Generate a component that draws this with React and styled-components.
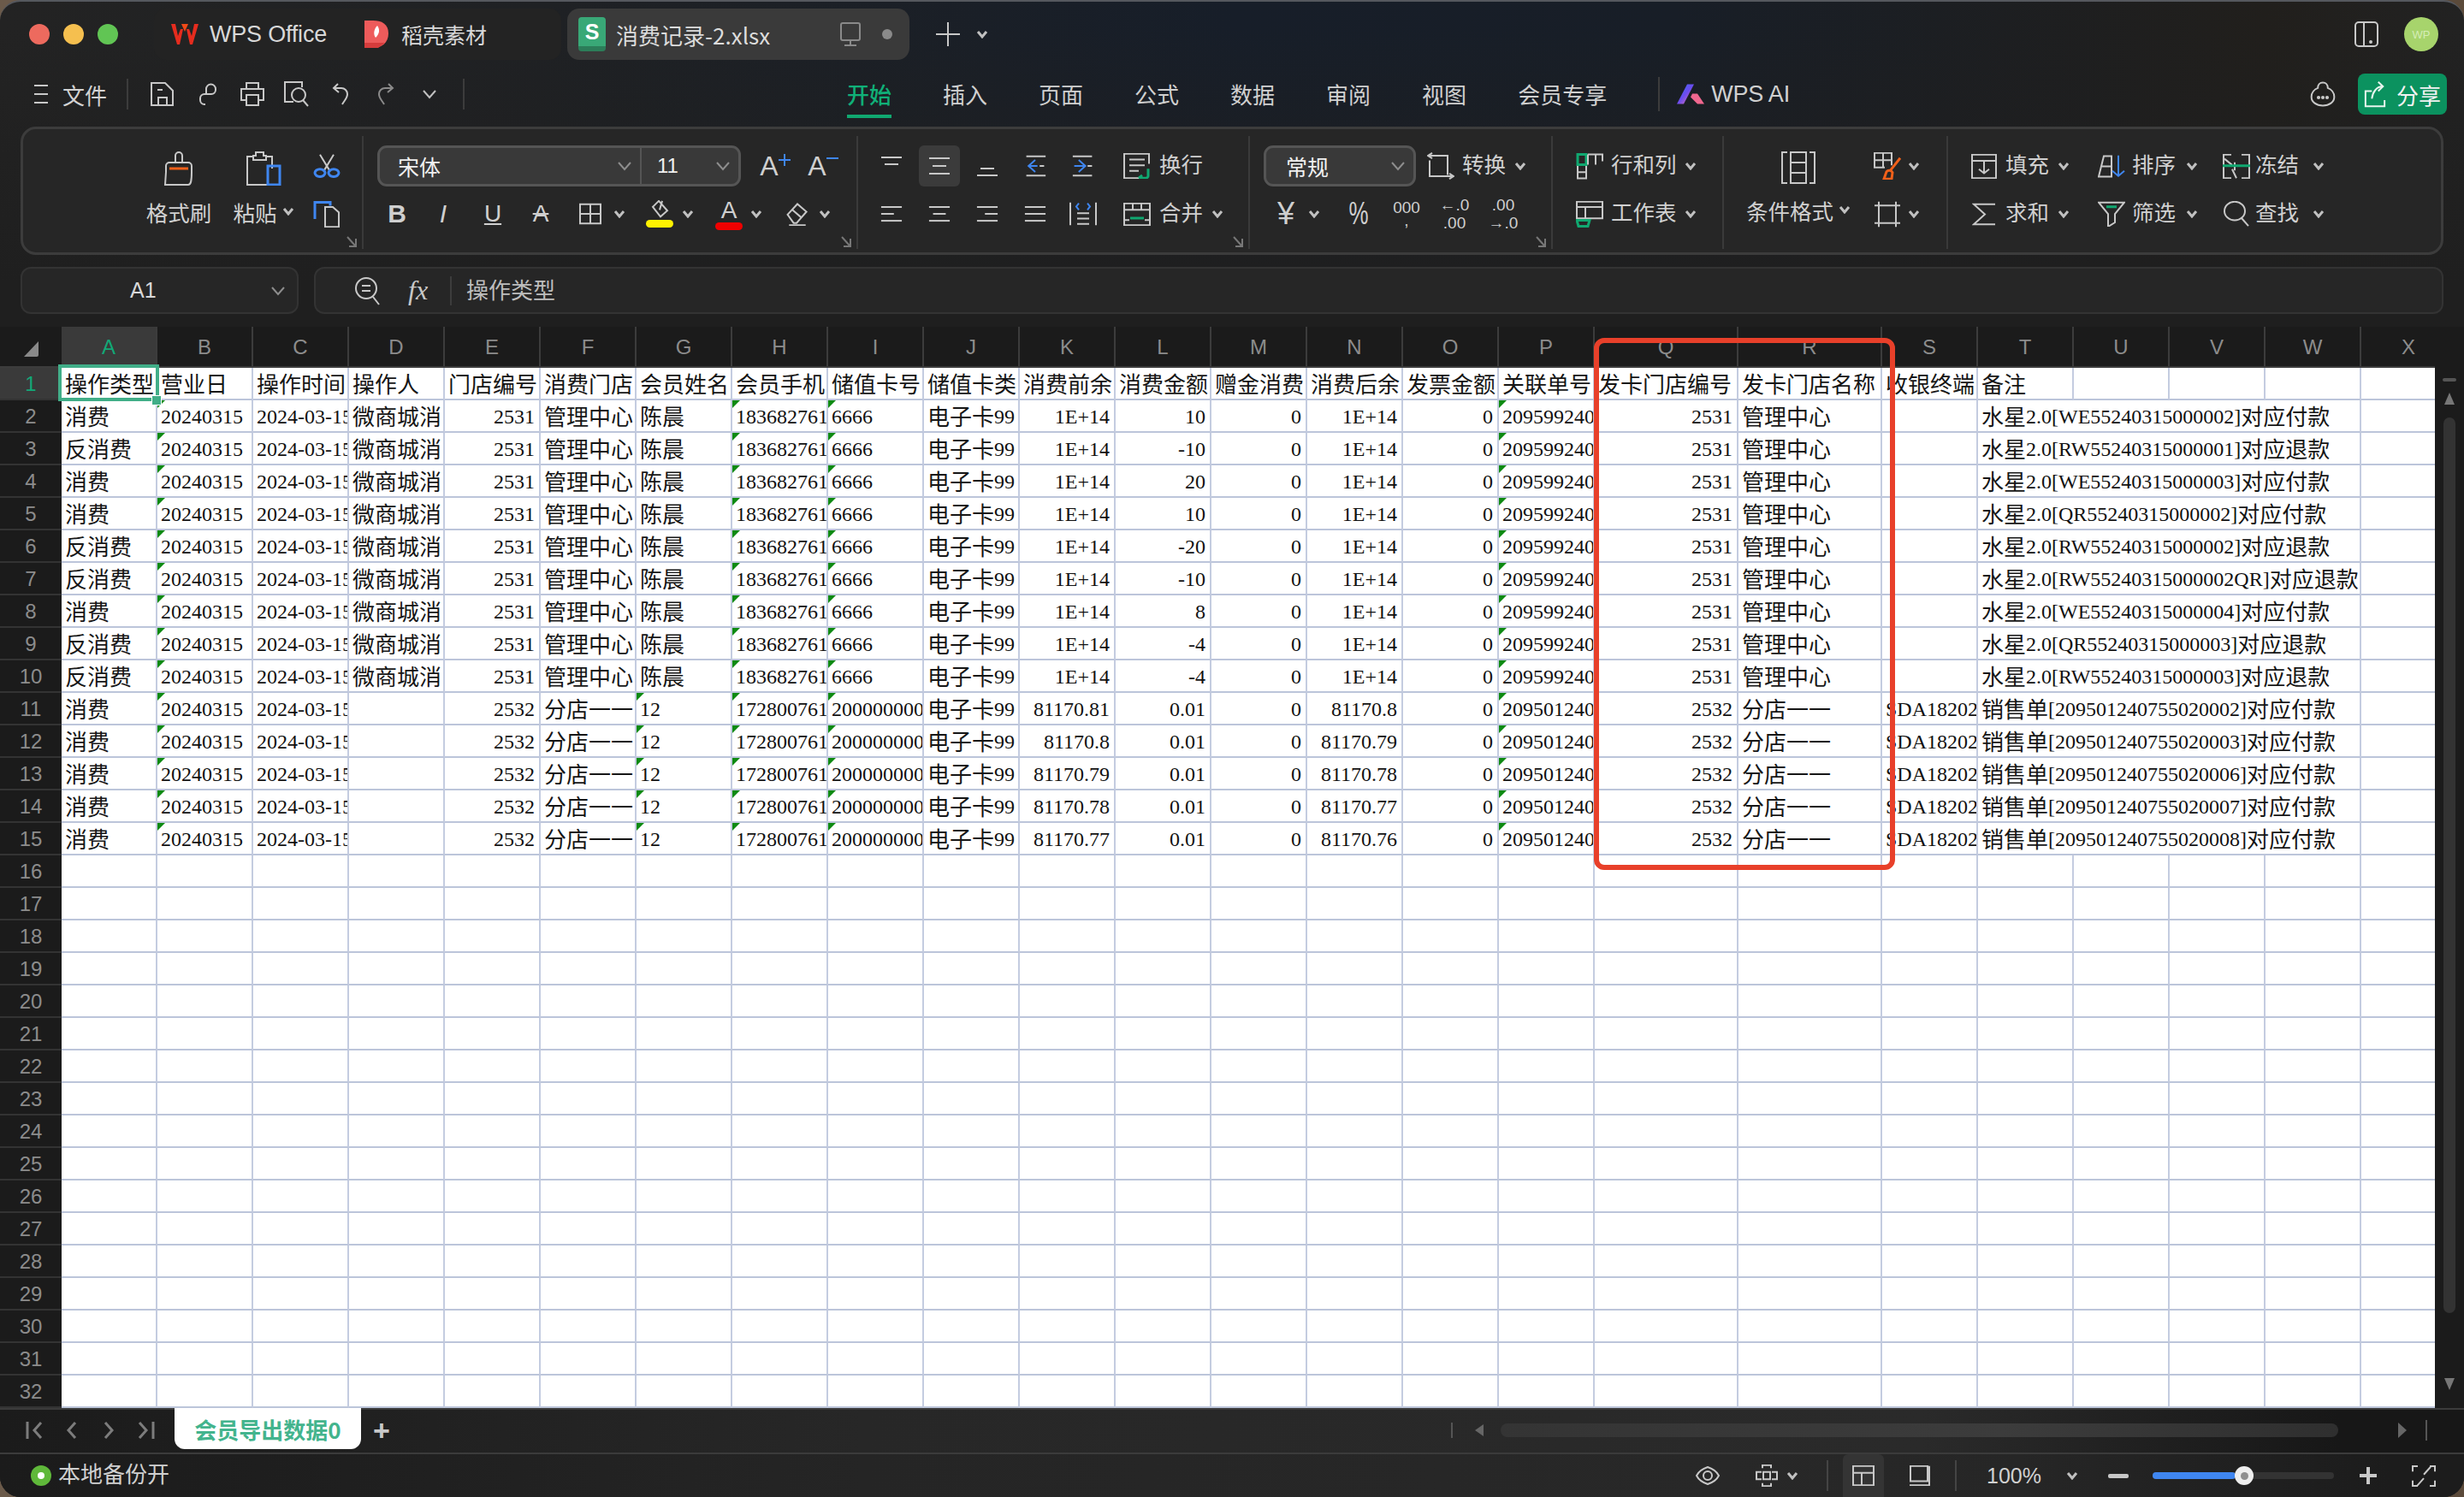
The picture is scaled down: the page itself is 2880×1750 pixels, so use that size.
import React from "react";
import styled, { createGlobalStyle, css } from "styled-components";

const UI = `"Noto Sans CJK SC", "Liberation Sans", sans-serif`;
const LAT = `"Liberation Sans", "Noto Sans CJK SC", sans-serif`;
const BLUE = "#3f86f0", GREEN = "#10a870", ORANGE = "#f0601a";

const Global = createGlobalStyle`
  html, body { margin: 0; padding: 0; width: 2880px; height: 1750px; overflow: hidden; background: linear-gradient(90deg,#6b5a4a,#4a4f5a 50%,#5b4a3a); }
  #root { width: 2880px; height: 1750px; }
  * { box-sizing: border-box; }
`;
const spaced = css`margin-left: ${p => p.$ml || 0}px; flex-shrink: 0;`;

const Window = styled.div`
  width: 2880px; height: 1750px; border-radius: 24px; overflow: hidden; display: flex; flex-direction: column;
  font-family: ${UI}; color: #cfcfcf; border-top: 2px solid #55585e;
  background: linear-gradient(180deg, rgba(31,31,31,0) 30px, #1f1f1f 330px), linear-gradient(90deg,#232323 0%,#1f2124 22%,#171e29 50%,#181e27 68%,#211f1c 92%,#222 100%);
`;
const TitleBar = styled.div`height: 76px; display: flex; align-items: center; padding-left: 34px; flex-shrink: 0;`;
const Light = styled.span`width: 24px; height: 24px; border-radius: 50%; background: ${p => p.$c}; ${spaced}`;
const TabGroup = styled.div`${spaced} display: flex; align-items: center; width: 476px; height: 60px; background: #232323; border-radius: 14px; padding-left: 20px;`;
const AppTab = styled.div`${spaced} display: flex; align-items: center; gap: 15px; font-size: 25px; color: #d8d8d8;`;
const AppLatin = styled.span`font-family: ${LAT}; font-size: 27px; letter-spacing: -.2px;`;
const AiText = styled(AppLatin)`margin-left: 8px; color: #d0d0d0;`;
const FileTab = styled.div`${spaced} display: flex; align-items: center; width: 400px; height: 60px; background: #3a3a3a; border-radius: 14px; padding-left: 13px; color: #dcdcdc; font-size: 26px;`;
const FileName = styled.span`margin-left: 12px; width: 262px; white-space: nowrap;`;
const SheetBadge = styled.span`width: 32px; height: 40px; border-radius: 4px; background: linear-gradient(180deg,#39a877 84%,#2c7d59 84%); color: #fff; font: bold 25px ${LAT}; display: flex; align-items: center; justify-content: center; padding-bottom: 6px;`;
const TabDot = styled.span`${spaced} width: 12px; height: 12px; border-radius: 50%; background: #8a8a8a;`;
const Avatar = styled.span`${spaced} width: 40px; height: 40px; border-radius: 50%; background: #a7d46c; color: #d5edb6; font: 13px ${LAT}; display: flex; align-items: center; justify-content: center;`;
const Push = styled.span`margin-left: auto;`;

const MenuBar = styled.div`height: 64px; margin-bottom: 6px; display: flex; align-items: center; padding-left: 40px; flex-shrink: 0; font-size: 26px;`;
const Sep = styled.span`${spaced} width: 2px; height: ${p => p.$h || 36}px; background: ${p => p.$c || "#3c3c3c"};`;
const MenuText = styled.span`${spaced} white-space: nowrap; color: #d2d2d2;`;
const FormulaText = styled(MenuText)`color: #bdbdbd; position: relative; top: -2px;`;
const MenuTab = styled.span`
  ${spaced} position: relative; white-space: nowrap; color: ${p => p.$on ? "#10b078" : "#d0d0d0"}; font-weight: ${p => p.$on ? 500 : 400}; line-height: 64px;
  ${p => p.$on && css`&::after { content: ""; position: absolute; left: 0; right: 0; top: 56px; height: 4px; background: #10a870; }`}
`;
const ShareBtn = styled.div`${spaced} width: 104px; height: 48px; border-radius: 8px; background: #0b925f; display: flex; align-items: center; justify-content: center; gap: 12px; color: #f2f2f2; margin-right: 20px;`;

const Ribbon = styled.div`
  margin: 0 24px; height: 150px; flex-shrink: 0; display: flex; background: #262626; border: 3px solid #3c3c3c; border-radius: 18px;
`;
const Group = styled.div`
  position: relative; flex-shrink: 0; width: ${p => p.$w}px; padding-left: ${p => p.$pl || 0}px;
  display: flex; ${p => p.$row ? "flex-direction: row;" : "flex-direction: column; gap: 8px; padding-top: 19px;"}
`;
const GroupLine = styled.span`width: 2px; height: 132px; margin-top: 8px; background: #3a3a3a; flex-shrink: 0;`;
const Launcher = styled.span`position: absolute; right: 6px; bottom: 5px; display: flex;`;
const Row = styled.div`display: flex; align-items: center; height: 48px;`;
const IconSlot = styled.span`${spaced} display: flex;`;
const Tool = styled.div`${spaced} display: flex; align-items: center; justify-content: center; width: ${p => p.$w || 36}px; height: 48px; border-radius: 6px; background: ${p => p.$on ? "#3b3b3b" : "transparent"}; color: #cfcfcf;`;
const Glyph = styled.span`
  font: ${p => p.$s || 28}px ${LAT}; font-weight: ${p => p.$b ? 700 : 400}; font-style: ${p => p.$i ? "italic" : "normal"}; text-decoration: ${p => p.$u ? "underline" : p.$st ? "line-through" : "none"};
  line-height: 1; color: ${p => p.$c || "#cfcfcf"}; white-space: nowrap; ${p => p.$nar && "transform: scaleX(.72);"}
`;
const Stack = styled.div`display: flex; flex-direction: column; align-items: center; gap: ${p => p.$gap ?? 2}px;`;
const Comma = styled(Glyph)`margin-top: -4px;`;
const Pill = styled.span`width: 32px; height: 9px; border-radius: 5px; background: ${p => p.$c};`;
const Label = styled.span`${spaced} font-size: 25.5px; color: #d0d0d0; white-space: nowrap; line-height: 1; position: relative; top: -3px;`;
const BigTool = styled.div`${spaced} width: ${p => p.$w}px; display: flex; flex-direction: column; align-items: center; padding-top: 26px;`;
const BigLabel = styled.div`margin-top: 12px; height: 36px; display: flex; align-items: center; font-size: 25.5px; color: #d0d0d0; white-space: nowrap; gap: 6px;`;
const SmallCol = styled.div`${spaced} display: flex; flex-direction: column; gap: 8px; padding-top: 19px;`;
const Select = styled.div`
  ${spaced} width: ${p => p.$w}px; height: 48px; display: flex; background: #393939; border: 3px solid #555; border-radius: 11px; color: #f0f0f0; font-size: 25px;
`;
const SelectPart = styled.div`display: flex; align-items: center; justify-content: space-between; padding: 0 9px 0 ${p => p.$pl || 21}px; width: ${p => p.$w || "auto"}; flex: ${p => p.$w ? "none" : 1}; & + & { border-left: 2px solid #555; }`;

const FormulaRow = styled.div`margin: 14px 24px 0; height: 55px; display: flex; gap: 18px; flex-shrink: 0;`;
const NameBox = styled.div`width: 325px; background: #262626; border: 2px solid #333; border-radius: 12px; display: flex; align-items: center; justify-content: space-between; padding: 0 13px 0 126px; font: 25px ${LAT}; color: #d8d8d8;`;
const FormulaBox = styled.div`flex: 1; background: #262626; border: 2px solid #333; border-radius: 12px; display: flex; align-items: center; padding-left: 46px; font-size: 26px; color: #b8b8b8;`;
const Fx = styled.span`${spaced} font: italic 32px "Liberation Serif", serif; color: #c8c8c8;`;

const SheetArea = styled.div`margin-top: 15px; display: flex; flex-shrink: 0; height: 1264px; background: #1b1b1b;`;
const Grid = styled.div`position: relative; width: 2846px; overflow: hidden; flex-shrink: 0;`;
const GridRow = styled.div`display: flex; height: 38px;`;
const HeadRow = styled.div`display: flex; height: 48px; border-bottom: 2px solid #3c3c3c;`;
const Corner = styled.div`width: 72px; flex-shrink: 0; display: flex; align-items: center; justify-content: center; padding-top: 4px;`;
const ColHead = styled.div`
  width: ${p => p.$w}px; flex-shrink: 0; border-right: 2px solid #3c3c3c; display: flex; align-items: center; justify-content: center; padding-top: 2px;
  font: 24px ${LAT}; color: ${p => p.$on ? "#12a877" : "#8c8c8c"}; background: ${p => p.$on ? "#3a3a3a" : "transparent"};
`;
const RowHead = styled.div`
  width: 72px; flex-shrink: 0; display: flex; align-items: center; justify-content: center; border-bottom: 2px solid #333; padding-top: 2px;
  font: 24px ${LAT}; color: ${p => p.$on ? "#12a877" : "#8c8c8c"}; background: ${p => p.$on ? "#3a3a3a" : "transparent"};
`;
const Cell = styled.div`
  position: relative; width: ${p => p.$w}px; flex-shrink: 0; height: 38px; overflow: hidden; background: #fff; white-space: nowrap;
  border-right: 2px solid #c4cce0; border-bottom: 2px solid #bcc5da;
  font: 24px/38px "Liberation Serif", serif; color: #111; padding: 0 ${p => p.$right ? 5 : 0}px 0 4px; text-align: ${p => p.$right ? "right" : "left"};
  ${p => p.$tri && css`&::before { content: ""; position: absolute; left: 0; top: 0; border-style: solid; border-width: 9px 9px 0 0; border-color: #0e8a12 transparent transparent transparent; }`}
`;
const Han = styled.span`font-family: "Noto Sans CJK SC", sans-serif; font-size: 26px; font-weight: 400; line-height: 30px; color: #161616; position: relative; top: 2px;`;
const Selection = styled.div`position: absolute; left: 68px; top: 44px; width: 118px; height: 43px; border: 4px solid #41ae88; pointer-events: none;`;
const Handle = styled.span`position: absolute; right: -7px; bottom: -9px; width: 12px; height: 12px; background: #41ae88; border: 1px solid #fff;`;
const RedBox = styled.div`position: absolute; left: 1863px; top: 13px; width: 352px; height: 622px; border: 6px solid #e8402a; border-radius: 12px; pointer-events: none;`;

const VScroll = styled.div`width: 34px; flex-shrink: 0; display: flex; flex-direction: column; align-items: center; padding-top: 60px;`;
const VDash = styled.span`width: 16px; height: 4px; border-radius: 2px; background: #555;`;
const VThumb = styled.span`margin-top: 14px; width: 14px; height: 1047px; border-radius: 7px; background: #333;`;
const TriWrap = styled.span`${spaced} display: flex; margin-top: ${p => p.$mt || 0}px;`;

const SheetBar = styled.div`height: 52px; flex-shrink: 0; display: flex; align-items: flex-start; padding-left: 30px; border-top: 2px solid #3b3b3b; background: linear-gradient(90deg,#1b1b1b 0%,#272727 35%,#2a2a2a 78%,#171717 95%);`;
const NavWrap = styled.div`display: flex; align-items: center; height: 48px;`;
const SheetTab = styled.div`${spaced} width: 218px; height: 48px; margin-top: -2px; background: #fff; border-radius: 0 0 12px 12px; display: flex; align-items: center; justify-content: center; color: #43b48d; font-size: 26px; font-weight: 700;`;
const AddSheet = styled.span`${spaced} font: bold 34px ${LAT}; color: #c8c8c8; line-height: 48px;`;
const HTrack = styled.div`${spaced} width: 979px; height: 16px; border-radius: 8px; background: linear-gradient(90deg,#343434,#3c3c3c 60%,#2f2f2f);`;
const HScrollWrap = styled.div`margin-left: auto; padding-right: 43px; display: flex; align-items: center; height: 48px;`;

const StatusBar = styled.div`flex: 1; display: flex; align-items: center; padding-left: 36px; border-top: 2px solid #3b3b3b; background: linear-gradient(90deg,#1b1b1b 0%,#252525 35%,#282828 70%,#262626 82%,#1c1c1c 97%);`;
const BackupDot = styled.span`width: 24px; height: 24px; border-radius: 50%; background: #5fb83a; display: flex; align-items: center; justify-content: center; &::after { content: ""; width: 8px; height: 8px; border-radius: 50%; background: #fff; }`;
const StatusText = styled.span`margin-left: 8px; font-size: 26px; color: #d0d0d0; position: relative; top: -4px;`;
const StatusRight = styled.div`margin-left: auto; padding-right: 33px; display: flex; align-items: center; height: 100%;`;
const ViewBtn = styled.div`${spaced} width: 48px; height: 100%; background: #343434; border-radius: 6px 6px 0 0; display: flex; align-items: center; justify-content: center;`;
const Zoom = styled.span`${spaced} width: 66px; font: 25px ${LAT}; color: #d0d0d0;`;
const Slider = styled.div`${spaced} position: relative; width: 212px; height: 8px; background: #333; border-radius: 4px;`;
const SliderFill = styled.div`height: 8px; width: 97px; background: ${BLUE}; border-radius: 4px;`;
const Knob = styled.span`position: absolute; left: 96px; top: -7px; width: 22px; height: 22px; border-radius: 50%; background: #eee; display: flex; align-items: center; justify-content: center; &::after { content: ""; width: 9px; height: 9px; border-radius: 50%; background: #8f8f8f; }`;
const Bar = styled.span`${spaced} width: ${p => p.$w}px; height: ${p => p.$h}px; background: #c8c8c8; border-radius: 2px;`;
const Gap = styled.span`width: ${p => p.$w}px; flex-shrink: 0;`;

const IcoBase = styled.svg`${spaced} fill: none; stroke: ${p => p.$c || "#c8c8c8"}; stroke-width: ${p => p.$sw || 2}; & * { vector-effect: non-scaling-stroke; }`;
const I = ({ w, h, dw, dh, c, sw, ml, children }) => (
  <IcoBase width={dw || w} height={dh || h} viewBox={`0 0 ${w} ${h}`} preserveAspectRatio="none" $c={c} $sw={sw} $ml={ml}>{children}</IcoBase>
);
const Chev = ({ ml, big, c }) => big
  ? <I w={18} h={12} ml={ml} c={c || "#8d8d8d"}><path d="M2 2l7 8 7-8" /></I>
  : <I w={14} h={10} ml={ml} sw={3} c={c || "#c0c0c0"}><path d="M2 2l5 6 5-6" /></I>;
const Arrow = () => <I w={12} h={14} c="#777"><path d="M1 1l9 10M11 3v9H3" /></I>;

const Icons = {
  Save: () => <I w={30} h={28}><path d="M2 1h16l9 9v17H2zM10 27v-9h10v9M9 9h6" /></I>,
  Link: () => <I w={24} h={26}><path d="M10 12V7a5.5 5.5 0 0 1 11 0v1a5 5 0 0 1-5 5H8a5 5 0 0 0-5 5v2a5 5 0 0 0 5 5h1" /></I>,
  Print: () => <I w={30} h={28}><path d="M8 8V1h14v7M8 21H2V8h26v13h-6M8 15h14v12H8z" /></I>,
  Preview: () => <I w={32} h={30}><path d="M12 24H2V1h20v6" /><circle cx="18" cy="16" r="8" /><path d="M23 22l6 7" /></I>,
  Undo: () => <I w={22} h={26}><path d="M8 1L3 6l6 5M3 6h9a7 7 0 0 1 7 7c0 5-4 8-6 12" /></I>,
  Redo: () => <I w={22} h={26} c="#8a8a8a"><path d="M14 1l5 5-6 5M19 6h-9a7 7 0 0 0-7 7c0 5 4 8 6 12" /></I>,
  Painter: () => <I w={38} h={40}><path d="M15 13V5a4 4 0 0 1 8 0v8M4 24v-7a4 4 0 0 1 4-4h22a4 4 0 0 1 4 4v7M4 24l-1 15h27c3 0 4-4 4-15" /><path d="M8 20h22" stroke={ORANGE} strokeWidth="3" /></I>,
  Paste: () => <I w={42} h={40}><path d="M9 6H2v33h24M31 20V6h-7M12 6V1h9v4h3v5H9V5h3" /><path d="M40 39H30" /><rect x="26" y="17" width="14" height="22" stroke={BLUE} strokeWidth="3" /></I>,
  Scissors: () => <I w={32} h={38} dh={28}><path d="M8 1l12 27M24 1L12 28" /><g stroke={BLUE} strokeWidth="3"><circle cx="8" cy="30" r="6" /><circle cx="24" cy="30" r="6" /></g></I>,
  Copy: () => <I w={32} h={40} dh={31}><path d="M2 27V2h18v5" stroke={BLUE} strokeWidth="3" /><path d="M14 9h9l7 8v22H14z" /></I>,
  Border: () => <I w={26} h={30} dh={26}><path d="M1 2h24v26H1zM13 2v26M1 15h24" /></I>,
  Bucket: () => <I w={26} h={24} dh={21}><path d="M12 1l-7 8 9 13 8-8zM16 1l-3 12" /></I>,
  Eraser: () => <I w={34} h={34} dw={30} dh={28}><path d="M4 18L17 3l12 11-13 16h-4zM10 11l12 11M6 33h22" /></I>,
  AlignV: ({ lines }) => <I w={26} h={28}>{lines.map(([y, a, b], i) => <path key={i} d={`M${a} ${y}H${b}`} />)}</I>,
  Outdent: () => <I w={30} h={30} dw={26} dh={26}><path d="M3 2h26M3 28h26M21 15h6" /><path d="M15 7l-9 8 9 8M6 15h12" stroke={BLUE} /></I>,
  Indent: () => <I w={30} h={30} dw={26} dh={26}><path d="M1 2h26M1 28h26M21 15h6" /><path d="M9 7l9 8-9 8M3 15h14" stroke={BLUE} /></I>,
  Wrap: () => <I w={32} h={36} dh={30}><path d="M22 35H1V1h29v14M7 9h18M7 17h18M7 25h11" /><path d="M29 22v10a3 3 0 0 1-3 3h-8M22 31l-4 4" stroke={GREEN} strokeWidth="3" /></I>,
  Hlines: ({ a }) => <I w={28} h={30} dw={26} dh={22}>{a.map(([x1, x2], i) => <path key={i} d={`M${x1} ${4 + i * 11}H${x2}`} />)}</I>,
  Dist: () => <I w={32} h={36} dh={28}><path d="M1 1v34M31 1v34M9 17h14M9 25h14M9 33h14" /><path d="M11 2L8 7l3 5M21 2l3 5-3 5" stroke={BLUE} /></I>,
  Merge: () => <I w={32} h={36} dh={27}><path d="M1 1h30v34H1zM1 11h30M11 1v10M21 1v10M1 27h6M25 27h6" /><path d="M8 24h16" stroke={GREEN} strokeWidth="3" /></I>,
  Convert: () => <I w={32} h={40} dh={32}><path d="M6 1L1 5l5 4M1 5h23v28M26 39l5-4-5-4M31 35H3V12" /></I>,
  RowCol: () => <I w={32} h={40} dh={32}><rect x="2" y="3" width="10" height="15" stroke={GREEN} strokeWidth="3" /><path d="M14 3h17v10M14 3v15M23 3v15M2 20v18h10V20M2 29h10" /></I>,
  Sheet: () => <I w={32} h={40} dh={31}><path d="M31 26H1V1h30zM1 9h30M11 9v17" /><path d="M1 29h15l-2 9H3z" stroke={GREEN} strokeWidth="3" /></I>,
  Cond: () => <I w={40} h={38}><path d="M7 1H1v36h6M33 1h6v36h-6M11 1h18v36H11zM11 13h18M11 25h18" /></I>,
  Style: () => <I w={34} h={38} dh={32}><path d="M22 18V1H2v20h12M2 11h20M12 1v20" /><path d="M32 8L20 26m-4 1l-3 10h9l1-9a4 4 0 0 0-7-1z" stroke={ORANGE} strokeWidth="3" /></I>,
  Frame: () => <I w={32} h={36} dh={31}><path d="M1 6h30M1 30h30M6 1v34M26 1v34" /></I>,
  Fill: () => <I w={30} h={36} dh={29}><path d="M1 1h28v34H1zM1 10h28M15 11v17M9 22l6 6 6-6" /></I>,
  Sort: () => <I w={32} h={36} dh={27}><path d="M1 34L7 2h9v32H1zM5 18h11" /><path d="M24 1v32M17 25l7 8 7-8" stroke={BLUE} /></I>,
  Freeze: () => <I w={32} h={36} dh={29}><path d="M10 1H1v34h9M22 1h9v34h-9M14 24V12M2 7l9 9M11 22l5 13" /><path d="M0 17h32" stroke={GREEN} strokeWidth="3" /></I>,
  Sum: () => <I w={28} h={32} dh={27}><path d="M27 2H2l13 14L2 30h25" /></I>,
  Filter: () => <I w={32} h={36} dh={30}><path d="M1 2h30L20 18v12l-8 6V18z" /><path d="M10 8h12" stroke={GREEN} strokeWidth="3" /></I>,
  Find: () => <I w={30} h={36} dh={30}><ellipse cx="13" cy="14" rx="12" ry="13" /><path d="M21 24l8 11" /></I>,
};

const WpsLogo = () => (
  <svg width="32" height="26" viewBox="0 0 32 26"><path d="M0 1h5l3 14 3-8 3 0-4 18H7zM32 1h-5l-3 14-3-8-3 0 4 18h3z" fill="#e62c1e" /><path d="M12 1h8l-4 9z" fill="#f04a18" /></svg>
);
const DaokeLogo = () => (
  <svg width="28" height="32" viewBox="0 0 28 32"><path d="M0 0h10c10 0 18 4 18 15s-8 17-18 17H0z" fill="#ee5b5b" /><path d="M0 26h24l-8 6H0z" fill="#d63c3c" /><path d="M15 6c3 4 3 9-2 14-3-4-2-10 2-14z" fill="#fff" /></svg>
);
const AiLogo = () => (
  <svg width="32" height="24" viewBox="0 0 32 42" preserveAspectRatio="none"><defs><linearGradient id="ai" x1="0" x2="1" y1="0" y2="1"><stop offset="0" stopColor="#3a6ff0" /><stop offset=".5" stopColor="#6a4cf0" /><stop offset="1" stopColor="#ff7aa0" /></linearGradient></defs><path d="M12 1h8l-12 40H0z" fill="url(#ai)" /><path d="M18 20h6l8 21h-8l-8-14z" fill="#f0678f" /></svg>
);

const BASE_COLS = "ABCDEFGHIJKLMNOPQRSTUVWX".split("");
const widthOf = c => (c === "Q" || c === "R" ? 168 : 112);
const RIGHT = new Set("EKLMNOQ".split(""));

const mixed = s => String(s).split(/([\u4e00-\u9fff]+)/).map((p, i) =>
  /[\u4e00-\u9fff]/.test(p) ? <Han key={i}>{p}</Han> : p);

const headers = { A: "操作类型", B: "营业日", C: "操作时间", D: "操作人", E: "门店编号", F: "消费门店", G: "会员姓名", H: "会员手机", I: "储值卡号", J: "储值卡类", K: "消费前余", L: "消费金额", M: "赠金消费", N: "消费后余", O: "发票金额", P: "关联单号", Q: "发卡门店编号", R: "发卡门店名称", S: "收银终端", T: "备注" };

const group1 = [
  ["消费", 10, "WE55240315000002", "付"], ["反消费", -10, "RW55240315000001", "退"], ["消费", 20, "WE55240315000003", "付"],
  ["消费", 10, "QR55240315000002", "付"], ["反消费", -20, "RW55240315000002", "退"], ["反消费", -10, "RW55240315000002QR", "退"],
  ["消费", 8, "WE55240315000004", "付"], ["反消费", -4, "QR55240315000003", "退"], ["反消费", -4, "RW55240315000003", "退"],
].map(([A, L, code, k]) => ({ A, B: "20240315", C: "2024-03-15", D: "微商城消", E: 2531, F: "管理中心", G: "陈晨", H: "18368276100", I: "6666", J: "电子卡99", K: "1E+14", L, M: 0, N: "1E+14", O: 0, P: "209599240000", Q: 2531, R: "管理中心", T: `水星2.0[${code}]对应${k}款` }));
const group2 = [["81170.81", "81170.8", "2"], ["81170.8", "81170.79", "3"], ["81170.79", "81170.78", "6"], ["81170.78", "81170.77", "7"], ["81170.77", "81170.76", "8"]]
  .map(([K, N, d]) => ({ A: "消费", B: "20240315", C: "2024-03-15", E: 2532, F: "分店一一", G: "12", H: "17280076100", I: "2000000000000", J: "电子卡99", K, L: "0.01", M: 0, N, O: 0, P: "209501240000", Q: 2532, R: "分店一一", S: "SDA18202000", T: `销售单[20950124075502000${d}]对应付款` }));
const rows = [...group1, ...group2];

const DataRow = ({ n, row }) => {
  const cells = [];
  const spanT = row && (row.T.length > 30 ? 4 : 3);
  let skip = 0;
  BASE_COLS.forEach(c => {
    if (skip > 0) { skip--; return; }
    let w = widthOf(c);
    if (c === "T" && row) {
      skip = spanT;
      w += spanT * 112;
    }
    const v = row ? row[c] : undefined;
    const tri = row && (["B", "H", "I", "P"].includes(c) || (c === "G" && row.G === "12"));
    cells.push(<Cell key={c} $w={w} $right={RIGHT.has(c)} $tri={tri}>{v !== undefined ? mixed(v) : null}</Cell>);
  });
  return <GridRow><RowHead>{n}</RowHead>{cells}</GridRow>;
};

const TriIcon = styled.svg`display: block;`;
const Tri = ({ d, c = "#777", w = 12, h = 14 }) => <TriIcon width={w} height={h} viewBox={`0 0 ${w} ${h}`}><path d={d} fill={c} /></TriIcon>;

const T = ({ children, w, ml, on }) => <Tool $w={w} $ml={ml} $on={on}>{children}</Tool>;
const Labeled = ({ icon, text, ml, iw = 32, tm = 10, cm }) => (
  <Row>
    <Tool $w={iw} $ml={ml}>{icon}</Tool>
    <Label $ml={tm}>{text}</Label>
    <Chev ml={cm ?? 10} />
  </Row>
);

export default function App() {
  const g = Icons;
  return (
    <Window>
      <Global />
      <TitleBar>
        <Light $c="#ed6a5e" /><Light $c="#f5bf4f" $ml={16} /><Light $c="#61c554" $ml={16} />
        <TabGroup $ml={42}>
          <WpsLogo />
          <AppTab $ml={13}><AppLatin>WPS Office</AppLatin></AppTab>
          <AppTab $ml={44}><DaokeLogo />稻壳素材</AppTab>
        </TabGroup>
        <FileTab $ml={7}>
          <SheetBadge>S</SheetBadge>
          <FileName>消费记录-2.xlsx</FileName>
          <I w={24} h={28} c="#8a8a8a"><path d="M3 1h18a2 2 0 0 1 2 2v16a2 2 0 0 1-2 2H3a2 2 0 0 1-2-2V3a2 2 0 0 1 2-2zM12 21v5M5 27h14" /></I>
          <TabDot $ml={25} />
        </FileTab>
        <I w={30} h={30} ml={30}><path d="M15 1v28M1 15h28" /></I>
        <Chev ml={18} />
        <Push />
        <I w={28} h={30}><path d="M5 1h18a4 4 0 0 1 4 4v20a4 4 0 0 1-4 4H5a4 4 0 0 1-4-4V5a4 4 0 0 1 4-4zM11 1v28" /><circle cx="19" cy="24" r="1" /></I>
        <Avatar $ml={30}>WP</Avatar>
        <Gap $w={30} />
      </TitleBar>
      <MenuBar>
        <I w={16} h={24}><path d="M0 2h16M0 12h16M0 22h16" /></I>
        <MenuText $ml={17}>文件</MenuText>
        <Sep $ml={23} />
        <IconSlot $ml={25}><g.Save /></IconSlot>
        <IconSlot $ml={26}><g.Link /></IconSlot>
        <IconSlot $ml={25}><g.Print /></IconSlot>
        <IconSlot $ml={21}><g.Preview /></IconSlot>
        <IconSlot $ml={24}><g.Undo /></IconSlot>
        <IconSlot $ml={31}><g.Redo /></IconSlot>
        <Chev ml={31} big c="#c0c0c0" />
        <Sep $ml={30} />
        {["开始", "插入", "页面", "公式", "数据", "审阅", "视图", "会员专享"].map((t, i) => (
          <MenuTab key={t} $on={i === 0} $ml={i === 0 ? 447 : 60}>{t}</MenuTab>
        ))}
        <Sep $ml={60} $h={40} />
        <IconSlot $ml={20}><AiLogo /></IconSlot>
        <AiText>WPS AI</AiText>
        <Push />
        <I w={36} h={38} dw={30} dh={30}><path d="M18 2c4 0 7 3 7 8 5 2 9 7 9 13 0 8-7 13-16 13S2 31 2 23c0-6 4-11 9-13 0-5 3-8 7-8z" /><circle cx="12" cy="24" r="1.3" /><circle cx="18" cy="24" r="1.3" /><circle cx="24" cy="24" r="1.3" /></I>
        <ShareBtn $ml={26}>
          <I w={28} h={36} dw={26} dh={32} c="#e8f5ee"><path d="M10 14H2v20h24v-8M10 24c1-9 6-16 14-16M18 2l6 6-6 6" /></I>
          分享
        </ShareBtn>
      </MenuBar>

      <Ribbon>
        <Group $w={396} $row $pl={144}>
          <BigTool $w={76}><g.Painter /><BigLabel>格式刷</BigLabel></BigTool>
          <BigTool $w={72} $ml={25}><g.Paste /><BigLabel>粘贴<Chev /></BigLabel></BigTool>
          <SmallCol $ml={18}>
            <Tool $w={40}><g.Scissors /></Tool>
            <Tool $w={40}><g.Copy /></Tool>
          </SmallCol>
          <Launcher><Arrow /></Launcher>
        </Group>
        <GroupLine />
        <Group $w={576} $pl={16}>
          <Row>
            <Select $w={425}>
              <SelectPart $w="304px"><span>宋体</span><Chev big /></SelectPart>
              <SelectPart $pl={18}><Glyph $s={24} $c="#f0f0f0">11</Glyph><Chev big /></SelectPart>
            </Select>
            <T w={34} ml={23}><Glyph $s={32}>A</Glyph><I w={14} h={30} c={BLUE}><path d="M7 1v14M0 8h14" /></I></T>
            <T w={34} ml={22}><Glyph $s={32}>A</Glyph><I w={14} h={30} c={BLUE}><path d="M0 6h14" /></I></T>
          </Row>
          <Row>
            <T w={46}><Glyph $b $s={30}>B</Glyph></T>
            <T w={62}><Glyph $i $s={30}>I</Glyph></T>
            <T w={54}><Glyph $u $s={28}>U</Glyph></T>
            <T w={58}><Glyph $st $s={28}>A</Glyph></T>
            <T w={58}><g.Border /></T>
            <Chev ml={-2} />
            <T ml={22}><Stack><g.Bucket /><Pill $c="#fff200" /></Stack></T>
            <Chev ml={8} />
            <T ml={23}><Stack $gap={0}><Glyph $s={28}>A</Glyph><Pill $c="#f00000" /></Stack></T>
            <Chev ml={7} />
            <T ml={23}><g.Eraser /></T>
            <Chev ml={7} />
          </Row>
          <Launcher><Arrow /></Launcher>
        </Group>
        <GroupLine />
        <Group $w={456} $pl={15}>
          <Row>
            <T w={48}><g.AlignV lines={[[4, 1, 25], [12, 5, 21]]} /></T>
            <T w={48} ml={8} on><g.AlignV lines={[[5, 1, 25], [14, 5, 21], [23, 1, 25]]} /></T>
            <T w={48} ml={8}><g.AlignV lines={[[17, 5, 21], [25, 1, 25]]} /></T>
            <T w={48} ml={8}><g.Outdent /></T>
            <T w={48} ml={8}><g.Indent /></T>
            <Tool $w={32} $ml={23}><g.Wrap /></Tool>
            <Label $ml={10}>换行</Label>
          </Row>
          <Row>
            <T w={48}><g.Hlines a={[[1, 27], [1, 17], [1, 27]]} /></T>
            <T w={48} ml={8}><g.Hlines a={[[1, 27], [6, 22], [1, 27]]} /></T>
            <T w={48} ml={8}><g.Hlines a={[[1, 27], [11, 27], [1, 27]]} /></T>
            <T w={48} ml={8}><g.Hlines a={[[1, 27], [1, 27], [1, 27]]} /></T>
            <T w={48} ml={8}><g.Dist /></T>
            <Tool $w={32} $ml={23}><g.Merge /></Tool>
            <Label $ml={10}>合并</Label>
            <Chev ml={10} />
          </Row>
          <Launcher><Arrow /></Launcher>
        </Group>
        <GroupLine />
        <Group $w={352} $pl={16}>
          <Row>
            <Select $w={178}><SelectPart $pl={23}><span>常规</span><Chev big /></SelectPart></Select>
            <Tool $w={30} $ml={14}><g.Convert /></Tool>
            <Label $ml={10}>转换</Label>
            <Chev ml={10} />
          </Row>
          <Row>
            <T w={52}><Glyph $s={36}>¥</Glyph></T>
            <Chev />
            <T w={52} ml={19}><Glyph $s={36} $nar>%</Glyph></T>
            <T w={56} ml={2}><Stack $gap={0}><Glyph $s={19}>000</Glyph><Comma $s={19}>,</Comma></Stack></T>
            <T w={56}><Stack><Glyph $s={19}>←.0</Glyph><Glyph $s={19}>.00</Glyph></Stack></T>
            <T w={56} ml={1}><Stack><Glyph $s={19}>.00</Glyph><Glyph $s={19}>→.0</Glyph></Stack></T>
          </Row>
          <Launcher><Arrow /></Launcher>
        </Group>
        <GroupLine />
        <Group $w={198} $pl={28}>
          <Labeled icon={<g.RowCol />} text="行和列" iw={30} cm={9} />
          <Labeled icon={<g.Sheet />} text="工作表" iw={30} cm={9} />
        </Group>
        <GroupLine />
        <Group $w={260} $row $pl={26}>
          <BigTool $w={122}><g.Cond /><BigLabel>条件格式<Chev /></BigLabel></BigTool>
          <SmallCol $ml={27}>
            <Row><Tool $w={32}><g.Style /></Tool><Chev ml={8} /></Row>
            <Row><Tool $w={32}><g.Frame /></Tool><Chev ml={8} /></Row>
          </SmallCol>
        </Group>
        <GroupLine />
        <Group $w={500} $pl={27}>
          <Row>
            <Labeled icon={<g.Fill />} text="填充" iw={30} tm={10} />
            <Labeled icon={<g.Sort />} text="排序" ml={33} tm={8} cm={12} />
            <Labeled icon={<g.Freeze />} text="冻结" ml={29} tm={6} cm={16} />
          </Row>
          <Row>
            <Labeled icon={<g.Sum />} text="求和" iw={30} tm={10} />
            <Labeled icon={<g.Filter />} text="筛选" ml={33} tm={8} cm={12} />
            <Labeled icon={<g.Find />} text="查找" ml={29} tm={6} cm={16} />
          </Row>
        </Group>
      </Ribbon>

      <FormulaRow>
        <NameBox><span>A1</span><Chev big /></NameBox>
        <FormulaBox>
          <I w={30} h={34}><circle cx="13" cy="14" r="12" /><path d="M8 11h10M8 17h10M21 24l7 9" /></I>
          <Fx $ml={32}>fx</Fx>
          <Sep $ml={26} $h={34} />
          <FormulaText $ml={17}>操作类型</FormulaText>
        </FormulaBox>
      </FormulaRow>

      <SheetArea>
        <Grid>
          <HeadRow>
            <Corner><Tri w={22} h={22} c="#8a8a8a" d="M20 3v16a2 2 0 0 1-2 2H3z" /></Corner>
            {BASE_COLS.map(c => <ColHead key={c} $w={widthOf(c)} $on={c === "A"}>{c}</ColHead>)}
          </HeadRow>
          <GridRow>
            <RowHead $on>1</RowHead>
            {BASE_COLS.map(c => <Cell key={c} $w={widthOf(c)}>{headers[c] ? mixed(headers[c]) : null}</Cell>)}
          </GridRow>
          {rows.map((r, i) => <DataRow key={i} n={i + 2} row={r} />)}
          {Array.from({ length: 17 }, (_, i) => <DataRow key={i} n={i + 16} />)}
          <Selection><Handle /></Selection>
          <RedBox />
        </Grid>
        <VScroll>
          <VDash />
          <TriWrap $mt={12}><Tri w={16} h={16} d="M8 1l6 14H2z" c="#777" /></TriWrap>
          <VThumb />
          <TriWrap $mt={75}><Tri w={16} h={16} d="M8 15L2 1h12z" c="#777" /></TriWrap>
        </VScroll>
      </SheetArea>

      <SheetBar>
        <NavWrap>
          <I w={22} h={22} c="#7c7c7c" sw={3}><path d="M2 1v20M18 2l-8 9 8 9" /></I>
          <I w={14} h={22} c="#7c7c7c" sw={3} ml={24}><path d="M12 2l-8 9 8 9" /></I>
          <I w={14} h={22} c="#7c7c7c" sw={3} ml={31}><path d="M2 2l8 9-8 9" /></I>
          <I w={22} h={22} c="#7c7c7c" sw={3} ml={24}><path d="M20 1v20M4 2l8 9-8 9" /></I>
        </NavWrap>
        <SheetTab $ml={23}>会员导出数据0</SheetTab>
        <AddSheet $ml={14}>+</AddSheet>
        <HScrollWrap>
          <Sep $h={18} $c="#555" />
          <TriWrap $ml={26}><Tri w={10} h={14} d="M10 0v14L0 7z" c="#666" /></TriWrap>
          <HTrack $ml={20} />
          <TriWrap $ml={70}><Tri w={10} h={18} d="M0 0v18l10-9z" c="#666" /></TriWrap>
          <Sep $ml={22} $h={24} $c="#555" />
        </HScrollWrap>
      </SheetBar>
      <StatusBar>
        <BackupDot />
        <StatusText>本地备份开</StatusText>
        <StatusRight>
          <I w={30} h={24}><path d="M15 2c6 2 11 6 13 10-2 4-7 8-13 10-6-2-11-6-13-10 2-4 7-8 13-10z" /><circle cx="15" cy="12" r="5" /></I>
          <I w={26} h={36} dh={26} ml={41}><path d="M8 6V1h10v5M8 30v5h10v-5M7 12H1v12h6M19 12h6v12h-6M9 12h8v12H9z" /></I>
          <Chev ml={10} />
          <Sep $ml={33} $c="#444" />
          <ViewBtn $ml={17}><I w={26} h={30} dh={24}><path d="M1 1h24v28H1zM1 11h24M11 11v18" /></I></ViewBtn>
          <I w={25} h={30} dh={24} ml={29}><path d="M2 1h20v22H2zM24 1v28H1" /></I>
          <Sep $ml={29} $c="#444" />
          <Zoom $ml={35}>100%</Zoom>
          <Chev ml={27} />
          <Bar $ml={35} $w={24} $h={5} />
          <Slider $ml={28}><SliderFill /><Knob /></Slider>
          <I w={20} h={20} ml={30} sw={4}><path d="M10 0v20M0 10h20" /></I>
          <I w={28} h={28} dh={25} ml={41}><path d="M1 8V1h6M21 1h6v7M27 20v7h-6M7 27H1v-7M22 2l-8 10M14 17l-8 10" /></I>
        </StatusRight>
      </StatusBar>
    </Window>
  );
}
